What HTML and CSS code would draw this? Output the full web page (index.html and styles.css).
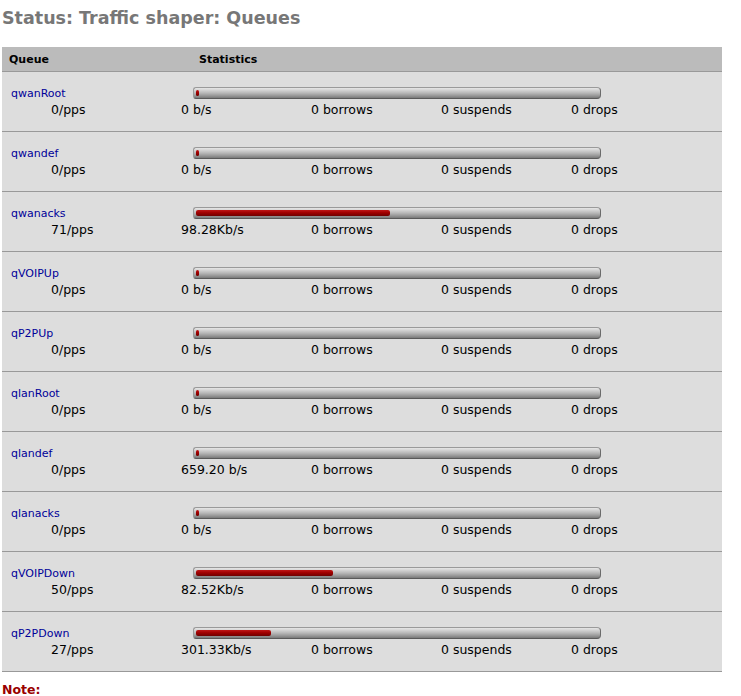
FILE: index.html
```html
<!DOCTYPE html>
<html>
<head>
<meta charset="utf-8">
<title>Status: Traffic shaper: Queues</title>
<link rel="stylesheet" href="styles.css">
</head>
<body>
<div class="page">
  <h1 class="pgtitle">Status: Traffic shaper: Queues</h1>
  <div class="qtable">
    <div class="qhead">
      <div class="hcell hqueue">Queue</div>
      <div class="hcell hstats">Statistics</div>
    </div>

    <div class="qrow">
      <div class="qcell"><a class="qname" href="#">qwanRoot</a><div class="pps">0/pps</div></div>
      <div class="scell"><div class="bar"><div class="fill" style="width:3px"></div></div>
        <div class="stats"><span>0 b/s</span><span>0 borrows</span><span>0 suspends</span><span>0 drops</span></div></div>
    </div>
    <div class="qrow">
      <div class="qcell"><a class="qname" href="#">qwandef</a><div class="pps">0/pps</div></div>
      <div class="scell"><div class="bar"><div class="fill" style="width:3px"></div></div>
        <div class="stats"><span>0 b/s</span><span>0 borrows</span><span>0 suspends</span><span>0 drops</span></div></div>
    </div>
    <div class="qrow">
      <div class="qcell"><a class="qname" href="#">qwanacks</a><div class="pps">71/pps</div></div>
      <div class="scell"><div class="bar"><div class="fill" style="width:194px"></div></div>
        <div class="stats"><span>98.28Kb/s</span><span>0 borrows</span><span>0 suspends</span><span>0 drops</span></div></div>
    </div>
    <div class="qrow">
      <div class="qcell"><a class="qname" href="#">qVOIPUp</a><div class="pps">0/pps</div></div>
      <div class="scell"><div class="bar"><div class="fill" style="width:3px"></div></div>
        <div class="stats"><span>0 b/s</span><span>0 borrows</span><span>0 suspends</span><span>0 drops</span></div></div>
    </div>
    <div class="qrow">
      <div class="qcell"><a class="qname" href="#">qP2PUp</a><div class="pps">0/pps</div></div>
      <div class="scell"><div class="bar"><div class="fill" style="width:3px"></div></div>
        <div class="stats"><span>0 b/s</span><span>0 borrows</span><span>0 suspends</span><span>0 drops</span></div></div>
    </div>
    <div class="qrow">
      <div class="qcell"><a class="qname" href="#">qlanRoot</a><div class="pps">0/pps</div></div>
      <div class="scell"><div class="bar"><div class="fill" style="width:3px"></div></div>
        <div class="stats"><span>0 b/s</span><span>0 borrows</span><span>0 suspends</span><span>0 drops</span></div></div>
    </div>
    <div class="qrow">
      <div class="qcell"><a class="qname" href="#">qlandef</a><div class="pps">0/pps</div></div>
      <div class="scell"><div class="bar"><div class="fill" style="width:3px"></div></div>
        <div class="stats"><span>659.20 b/s</span><span>0 borrows</span><span>0 suspends</span><span>0 drops</span></div></div>
    </div>
    <div class="qrow">
      <div class="qcell"><a class="qname" href="#">qlanacks</a><div class="pps">0/pps</div></div>
      <div class="scell"><div class="bar"><div class="fill" style="width:3px"></div></div>
        <div class="stats"><span>0 b/s</span><span>0 borrows</span><span>0 suspends</span><span>0 drops</span></div></div>
    </div>
    <div class="qrow">
      <div class="qcell"><a class="qname" href="#">qVOIPDown</a><div class="pps">50/pps</div></div>
      <div class="scell"><div class="bar"><div class="fill" style="width:137px"></div></div>
        <div class="stats"><span>82.52Kb/s</span><span>0 borrows</span><span>0 suspends</span><span>0 drops</span></div></div>
    </div>
    <div class="qrow">
      <div class="qcell"><a class="qname" href="#">qP2PDown</a><div class="pps">27/pps</div></div>
      <div class="scell"><div class="bar"><div class="fill" style="width:75px"></div></div>
        <div class="stats"><span>301.33Kb/s</span><span>0 borrows</span><span>0 suspends</span><span>0 drops</span></div></div>
    </div>
  </div>
  <div class="note">Note:</div>
</div>
</body>
</html>
```

FILE: styles.css
```css
html, body {
  margin: 0;
  padding: 0;
  background: #ffffff;
}
body {
  font-family: "DejaVu Sans", "Liberation Sans", sans-serif;
  color: #000;
}
.page {
  padding: 0 2px;
  width: 720px;
}
.pgtitle {
  margin: 8px 0 0 0;
  font-size: 17.5px;
  line-height: 21px;
  font-weight: bold;
  color: #777777;
}
.qtable {
  margin-top: 18px;
  width: 720px;
}
.qhead {
  display: flex;
  height: 23px;
  padding-top: 1px;
  background: #bbbbbb;
  border-bottom: 1px solid #999999;
  font-size: 11px;
  font-weight: bold;
  line-height: 23px;
}
.hqueue {
  width: 190px;
  padding-left: 7px;
}
.qrow {
  display: flex;
  height: 59px;
  background: #dddddd;
  border-bottom: 1px solid #999999;
}
.qcell {
  width: 170px;
  padding: 14px 0 0 9px;
}
.qname {
  display: block;
  font-size: 11px;
  line-height: 16px;
  color: #000099;
  text-decoration: none;
}
.pps {
  font-size: 12.5px;
  line-height: 16px;
  padding-left: 40px;
}
.scell {
  flex: 1;
  padding-top: 15px;
}
.bar {
  margin-left: 12px;
  width: 402px;
  height: 6px;
  padding: 2px;
  border: 1px solid #9a9a9a;
  border-bottom-color: #5a5a5a;
  border-right-color: #6a6a6a;
  border-radius: 3px 4px 4px 3px;
  background: linear-gradient(to bottom, #e6e6e6 0%, #d0d0d0 25%, #b8b8b8 50%, #9a9a9a 75%, #7a7a7a 100%);
  box-sizing: content-box;
}
.fill {
  height: 6px;
  border-radius: 2px;
  background: linear-gradient(to bottom, #c01818 0%, #a00000 45%, #700000 100%);
}
.stats {
  display: flex;
  margin-top: 3px;
  font-size: 12.5px;
  line-height: 16px;
}
.stats span {
  width: 130px;
}
.note {
  margin-top: 10px;
  font-size: 12.5px;
  line-height: 16px;
  font-weight: bold;
  color: #990000;
}
```
